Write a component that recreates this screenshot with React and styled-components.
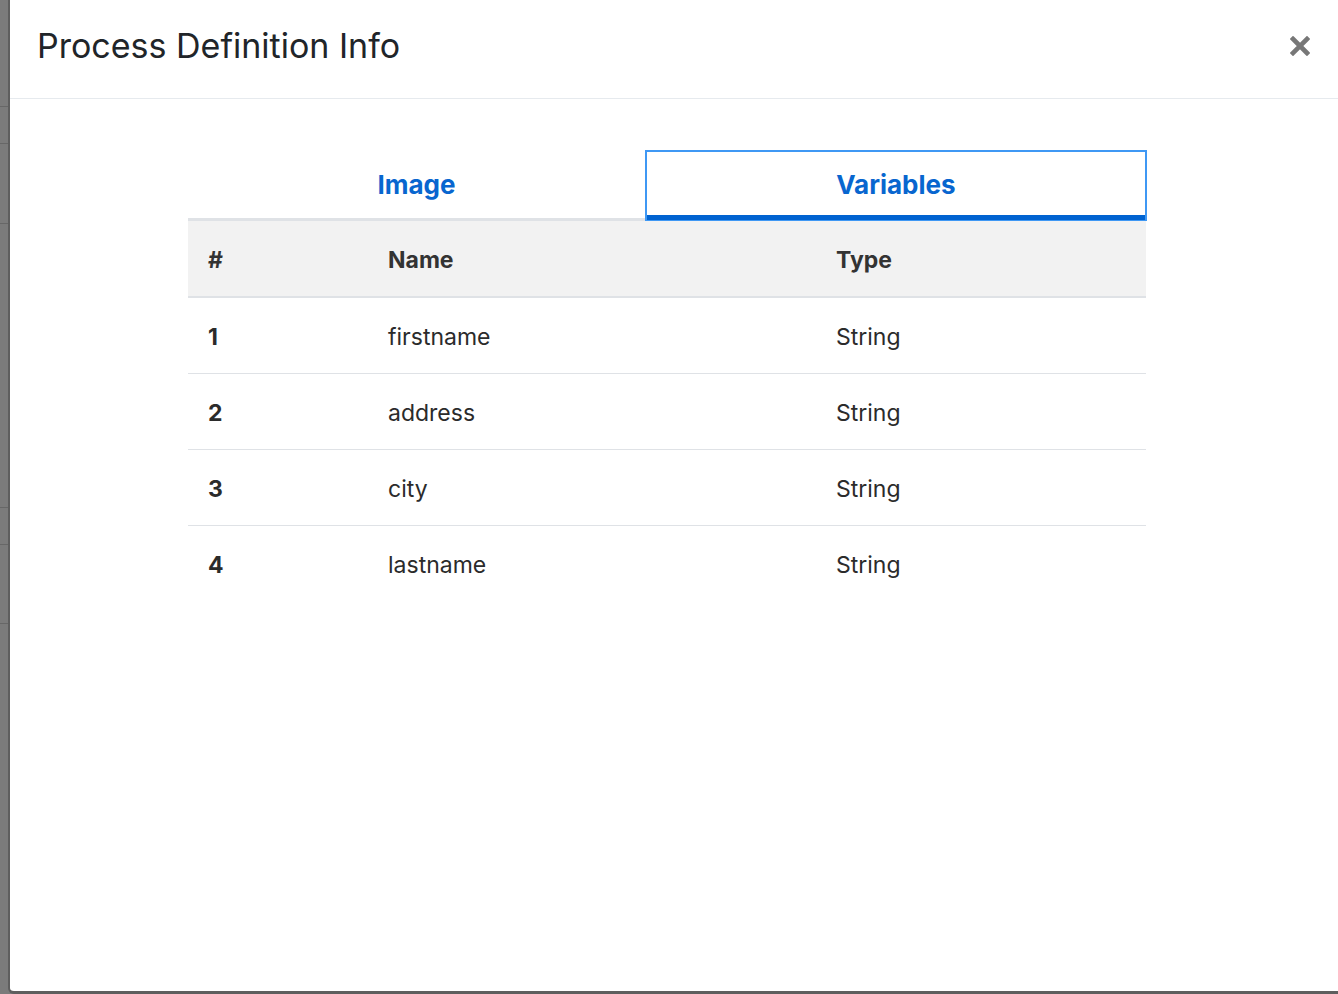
import React, { useState } from "react";
import styled, { createGlobalStyle } from "styled-components";

const GlobalStyle = createGlobalStyle`
  html, body {
    margin: 0;
    padding: 0;
    background: #7b7b7b;
    font-family: Inter, "Noto Sans", sans-serif;
  }
`;

const Page = styled.div`
  display: flex;
  height: 994px;
  overflow: hidden;
  background: #7b7b7b;
`;

const Backdrop = styled.div`
  width: 8px;
  display: flex;
  flex-direction: column;
`;

const BackdropRow = styled.div`
  height: ${(p) => p.$h}px;
  flex-shrink: 0;
  border-bottom: ${(p) => (p.$line ? "1px solid #676767" : "none")};
`;

const Modal = styled.div`
  flex: 1;
  height: 994px;
  box-sizing: border-box;
  background: #fff;
  border-left: 2px solid #5e5e5e;
  border-bottom: 3px solid #5e5e5e;
  border-bottom-left-radius: 6px;
  display: flex;
  flex-direction: column;
`;

const Header = styled.div`
  height: 99px;
  display: flex;
  align-items: center;
  justify-content: space-between;
  padding: 0 28px 8px 27px;
  box-sizing: border-box;
  border-bottom: 1px solid #e6eaee;
`;

const Title = styled.h1`
  margin: 0;
  font-size: 34px;
  font-weight: 400;
  color: #212529;
`;

const CloseButton = styled.button`
  border: none;
  background: none;
  padding: 0;
  margin-top: 2px;
  cursor: pointer;
  display: flex;
`;

const Body = styled.div`
  padding: 51px 0 0 178px;
`;

const Panel = styled.div`
  width: 958px;
`;

const Tabs = styled.div`
  display: flex;
  height: 71px;
`;

const Tab = styled.button`
  flex: 1 1 auto;
  box-sizing: border-box;
  background: #fff;
  font-family: inherit;
  font-size: 26px;
  font-weight: 700;
  color: #0866cf;
  cursor: pointer;
  padding: ${(p) => (p.$active ? "0 0 3px" : "0")};
  border: ${(p) => (p.$active ? "2px solid #3f98f4" : "none")};
  border-bottom: ${(p) => (p.$active ? "1px solid #3f98f4" : "3px solid #dfe2e6")};
  box-shadow: ${(p) => (p.$active ? "inset 0 -5px 0 #0063d1" : "none")};
  margin-right: ${(p) => (p.$active ? "-1px" : "0")};
`;

const Table = styled.table`
  width: 958px;
  border-collapse: collapse;
  table-layout: fixed;
  font-size: 23px;
  color: #2b2b2b;
`;

const HeadRow = styled.tr`
  background: #f2f2f2;
  border-bottom: 2px solid #dfe2e6;
`;

const Row = styled.tr`
  border-bottom: ${(p) => (p.$last ? "none" : "1px solid #dfe2e6")};
`;

const Cell = styled.td`
  height: 73px;
  padding: 2px 0 0 20px;
  font-weight: ${(p) => (p.$bold ? 700 : 400)};
  text-align: left;
  vertical-align: middle;
`;

const HeadCell = styled(Cell).attrs({ as: "th" })`
  font-weight: 700;
  color: #333;
`;

const backdropLines = [106, 36, 79, 283, 36, 78, 374];

const variables = [
  { name: "firstname", type: "String" },
  { name: "address", type: "String" },
  { name: "city", type: "String" },
  { name: "lastname", type: "String" },
];

export default function App() {
  const [tab, setTab] = useState("variables");

  return (
    <Page>
      <GlobalStyle />
      <Backdrop>
        {backdropLines.map((h, i) => (
          <BackdropRow key={i} $h={h} $line={i < backdropLines.length - 1} />
        ))}
      </Backdrop>
      <Modal>
        <Header>
          <Title>Process Definition Info</Title>
          <CloseButton aria-label="Close">
            <svg width="20" height="20" viewBox="0 0 20 20">
              <path
                d="M3 3 L17 17 M17 3 L3 17"
                stroke="#777"
                strokeWidth="4.6"
                strokeLinecap="square"
              />
            </svg>
          </CloseButton>
        </Header>
        <Body>
          <Panel>
            <Tabs>
              <Tab $active={tab === "image"} onClick={() => setTab("image")}>
                Image
              </Tab>
              <Tab
                $active={tab === "variables"}
                onClick={() => setTab("variables")}
              >
                Variables
              </Tab>
            </Tabs>
            <Table>
              <colgroup>
                <col style={{ width: 180 }} />
                <col style={{ width: 448 }} />
                <col style={{ width: 330 }} />
              </colgroup>
              <thead>
                <HeadRow>
                  <HeadCell>#</HeadCell>
                  <HeadCell>Name</HeadCell>
                  <HeadCell>Type</HeadCell>
                </HeadRow>
              </thead>
              <tbody>
                {variables.map((v, i) => (
                  <Row key={v.name} $last={i === variables.length - 1}>
                    <Cell $bold>{i + 1}</Cell>
                    <Cell>{v.name}</Cell>
                    <Cell>{v.type}</Cell>
                  </Row>
                ))}
              </tbody>
            </Table>
          </Panel>
        </Body>
      </Modal>
    </Page>
  );
}
